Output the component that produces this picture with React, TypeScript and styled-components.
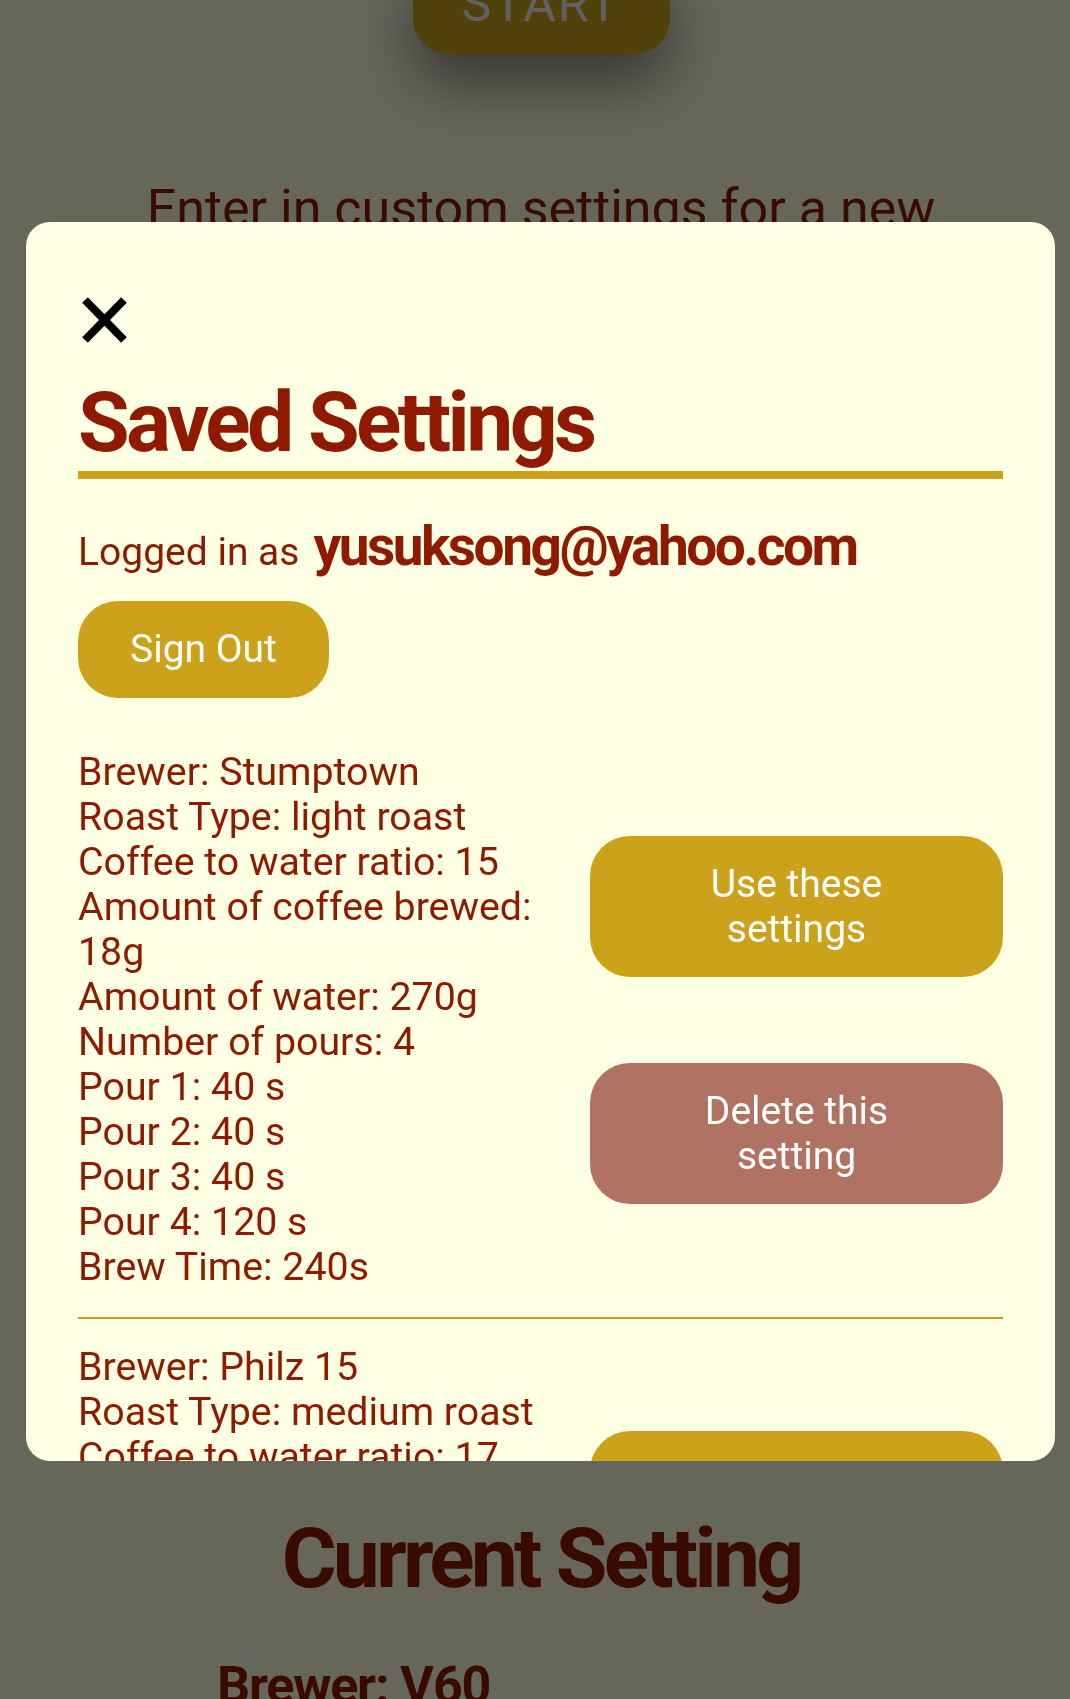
import React from "react";
import styled, { createGlobalStyle } from "styled-components";

const RED = "#8F1A00";
const GOLD = "#CBA21A";
const ROSE = "#B07262";
const CREAM = "#FFFFE4";

const Global = createGlobalStyle`
  html, body { margin: 0; padding: 0; }
  body {
    background: ${CREAM};
    font-family: Roboto, "Noto Sans", Arial, sans-serif;
    width: 1070px;
    height: 1699px;
    overflow: hidden;
  }
  * { box-sizing: border-box; }
`;

/* ---------- page underneath ---------- */
const Page = styled.main`
  display: flex;
  flex-direction: column;
  align-items: center;
  margin-top: -46px;
  padding-left: 12px;
  color: ${RED};
`;

const StartButton = styled.button`
  width: 257px;
  height: 100px;
  border: none;
  border-radius: 36px;
  background: ${GOLD};
  color: #f2f2f2;
  font-family: Roboto, sans-serif;
  font-size: 50px;
  letter-spacing: 2px;
  display: flex;
  align-items: center;
  justify-content: center;
  box-shadow: 0 30px 60px rgba(0, 0, 0, 0.45);
`;

const Intro = styled.p`
  margin: 124px 0 0;
  max-width: 860px;
  text-align: center;
  font-size: 52px;
  line-height: 1.2;
`;

const FormPanel = styled.section`
  height: 1214px;
  width: 800px;
  display: flex;
  flex-direction: column;
  gap: 40px;
  padding-top: 60px;
`;

const FieldLabel = styled.label`
  display: flex;
  flex-direction: column;
  gap: 10px;
  font-size: 39px;
`;

const FieldInput = styled.div`
  height: 70px;
  border: 2px solid ${GOLD};
  border-radius: 12px;
  background: #fff;
`;

const SectionTitle = styled.h2`
  margin: 0;
  font-size: 84px;
  font-weight: 700;
  letter-spacing: -3.8px;
  line-height: 1;
`;

const CurrentList = styled.ul`
  list-style: none;
  margin: 54px 0 0;
  padding: 0 0 0 205px;
  align-self: stretch;
`;

const CurrentItem = styled.li`
  font-size: 52px;
  font-weight: 700;
  letter-spacing: -1.2px;
  line-height: 1.2;
`;

/* ---------- modal ---------- */
const Overlay = styled.div`
  position: fixed;
  inset: 0;
  background: rgba(0, 0, 0, 0.6);
`;

const Modal = styled.div`
  position: absolute;
  top: 222px;
  left: 26px;
  width: 1029px;
  height: 1239px;
  overflow: hidden;
  border-radius: 24px;
  background: ${CREAM};
  padding: 75px 52px 0;
  color: ${RED};
`;

const CloseButton = styled.button`
  display: block;
  width: 50px;
  height: 46px;
  padding: 0;
  border: none;
  background: none;
  cursor: pointer;
`;

const ModalTitle = styled.h1`
  margin: 38px 0 0;
  padding-bottom: 6px;
  border-bottom: 8px solid ${GOLD};
  font-size: 84px;
  font-weight: 700;
  letter-spacing: -3.6px;
  line-height: 1;
`;

const LoggedRow = styled.div`
  display: flex;
  align-items: baseline;
  gap: 14px;
  margin-top: 34px;
  font-size: 39px;
  line-height: 1.2;
`;

const Email = styled.span`
  font-size: 55px;
  font-weight: 700;
  letter-spacing: -2.5px;
`;

const PillButton = styled.button<{ $tone: "gold" | "rose" }>`
  border: none;
  background: ${(p) => (p.$tone === "gold" ? GOLD : ROSE)};
  color: #fff;
  font-family: Roboto, sans-serif;
  font-size: 39px;
  line-height: 45px;
  text-align: center;
  cursor: pointer;
`;

const SignOut = styled(PillButton)`
  margin-top: 22px;
  padding: 26px 52px;
  border-radius: 40px;
`;

const SettingsList = styled.div`
  margin-top: 52px;
`;

const SettingRow = styled.div`
  display: grid;
  grid-template-columns: 1fr 413px;
  column-gap: 32px;
  align-items: center;
`;

const Details = styled.div`
  font-size: 39.3px;
  line-height: 45px;
`;

const Actions = styled.div`
  display: flex;
  flex-direction: column;
  gap: 86px;
`;

const ActionButton = styled(PillButton)`
  width: 100%;
  padding: 25.5px 60px;
  border-radius: 40px;
`;

const Divider = styled.hr`
  margin: 27px 0 26px;
  border: none;
  height: 2px;
  background: #C99A1C;
`;

type Setting = {
  brewer: string;
  roast: string;
  ratio: number;
  coffee: number;
  water: number;
  pours: number[];
  time: number;
};

const settings: Setting[] = [
  { brewer: "Stumptown", roast: "light roast", ratio: 15, coffee: 18, water: 270, pours: [40, 40, 40, 120], time: 240 },
  { brewer: "Philz 15", roast: "medium roast", ratio: 17, coffee: 20, water: 340, pours: [45, 45, 45, 105], time: 240 },
];

const CloseIcon = () => (
  <svg width="50" height="46" viewBox="0 0 50 46">
    <path d="M7 3 L46 43 M46 3 L7 43" stroke="#000" strokeWidth="8" strokeLinecap="butt" />
  </svg>
);

export default function App() {
  return (
    <>
      <Global />
      <Page>
        <StartButton>START</StartButton>
        <Intro>Enter in custom settings for a new brew</Intro>
        <FormPanel>
          <FieldLabel>
            Brewer
            <FieldInput />
          </FieldLabel>
          <FieldLabel>
            Roast Type
            <FieldInput />
          </FieldLabel>
          <FieldLabel>
            Coffee to water ratio
            <FieldInput />
          </FieldLabel>
          <FieldLabel>
            Amount of coffee
            <FieldInput />
          </FieldLabel>
        </FormPanel>
        <SectionTitle>Current Setting</SectionTitle>
        <CurrentList>
          <CurrentItem>Brewer: V60</CurrentItem>
          <CurrentItem>Roast Type: light roast</CurrentItem>
        </CurrentList>
      </Page>

      <Overlay>
        <Modal>
          <CloseButton aria-label="Close">
            <CloseIcon />
          </CloseButton>
          <ModalTitle>Saved Settings</ModalTitle>
          <LoggedRow>
            <span>Logged in as</span>
            <Email>yusuksong@yahoo.com</Email>
          </LoggedRow>
          <SignOut $tone="gold">Sign Out</SignOut>
          <SettingsList>
            {settings.map((s, i) => (
              <React.Fragment key={s.brewer}>
                {i > 0 && <Divider />}
                <SettingRow>
                  <Details>
                    <div>Brewer: {s.brewer}</div>
                    <div>Roast Type: {s.roast}</div>
                    <div>Coffee to water ratio: {s.ratio}</div>
                    <div>Amount of coffee brewed: {s.coffee}g</div>
                    <div>Amount of water: {s.water}g</div>
                    <div>Number of pours: {s.pours.length}</div>
                    {s.pours.map((p, j) => (
                      <div key={j}>
                        Pour {j + 1}: {p} s
                      </div>
                    ))}
                    <div>Brew Time: {s.time}s</div>
                  </Details>
                  <Actions>
                    <ActionButton $tone="gold">Use these settings</ActionButton>
                    <ActionButton $tone="rose">Delete this setting</ActionButton>
                  </Actions>
                </SettingRow>
              </React.Fragment>
            ))}
          </SettingsList>
        </Modal>
      </Overlay>
    </>
  );
}
